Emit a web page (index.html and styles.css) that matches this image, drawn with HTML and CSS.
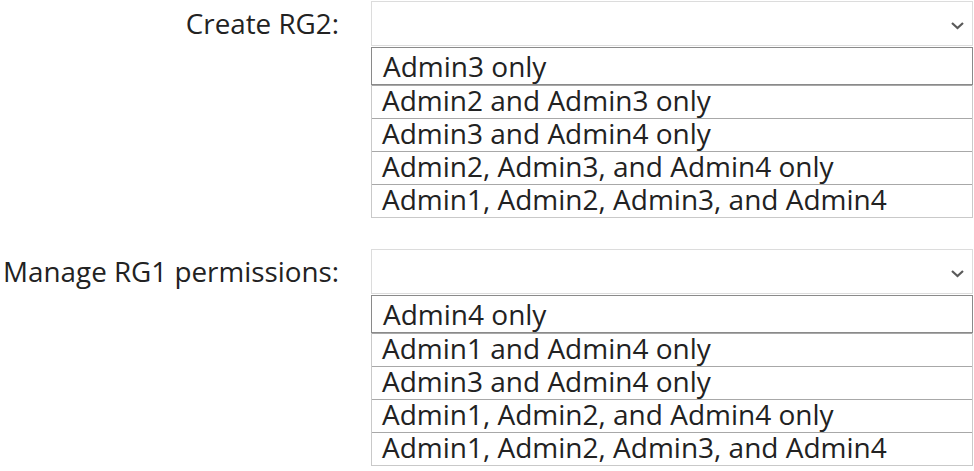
FILE: index.html
```html
<!DOCTYPE html>
<html lang="en">
<head>
<meta charset="utf-8">
<title>Dropdowns</title>
<link rel="stylesheet" href="styles.css">
</head>
<body>
<div class="form">
  <div class="field">
    <div class="label">Create RG2:</div>
    <div class="control">
      <div class="select">
        <svg class="chev" width="15" height="9" viewBox="0 0 15 9"><path d="M2 2 L7.5 7 L13 2" fill="none" stroke="#5a5a5a" stroke-width="2.2"/></svg>
      </div>
      <ul class="options">
        <li class="opt first">Admin3 only</li>
        <li class="opt">Admin2 and Admin3 only</li>
        <li class="opt">Admin3 and Admin4 only</li>
        <li class="opt">Admin2, Admin3, and Admin4 only</li>
        <li class="opt">Admin1, Admin2, Admin3, and Admin4</li>
      </ul>
    </div>
  </div>
  <div class="field">
    <div class="label">Manage RG1 permissions:</div>
    <div class="control">
      <div class="select">
        <svg class="chev" width="15" height="9" viewBox="0 0 15 9"><path d="M2 2 L7.5 7 L13 2" fill="none" stroke="#5a5a5a" stroke-width="2.2"/></svg>
      </div>
      <ul class="options">
        <li class="opt first">Admin4 only</li>
        <li class="opt">Admin1 and Admin4 only</li>
        <li class="opt">Admin3 and Admin4 only</li>
        <li class="opt">Admin1, Admin2, and Admin4 only</li>
        <li class="opt">Admin1, Admin2, Admin3, and Admin4</li>
      </ul>
    </div>
  </div>
</div>
</body>
</html>
```
FILE: styles.css
```css
html, body {
  margin: 0;
  padding: 0;
  background: #ffffff;
}
body {
  font-family: "Open Sans", "Noto Sans", sans-serif;
  color: #222222;
}
.form {
  display: flex;
  flex-direction: column;
  gap: 31px;
  padding-top: 1px;
}
.field {
  display: grid;
  grid-template-columns: 339px 602px;
  column-gap: 32px;
  align-items: start;
}
.label {
  height: 43px;
  display: flex;
  align-items: center;
  justify-content: flex-end;
  font-size: 27.8px;
  line-height: 34px;
  white-space: nowrap;
}
.control {
  display: flex;
  flex-direction: column;
  gap: 1px;
}
.select {
  height: 45px;
  border: 1px solid #dcdcdc;
  display: flex;
  align-items: center;
  justify-content: flex-end;
  padding-right: 7px;
  box-sizing: border-box;
}
.chev {
  margin-top: 3px;
}
.options {
  list-style: none;
  margin: 0;
  padding: 0;
  border: 1px solid #c9c9c9;
  border-top: none;
}
.opt {
  height: 33px;
  border-top: 1px solid #a8a8a8;
  box-sizing: border-box;
  display: flex;
  align-items: center;
  padding-left: 10px;
  padding-bottom: 5px;
  font-size: 28px;
  line-height: 28px;
  white-space: nowrap;
}
.opt.first {
  height: 38px;
  border: 1px solid #8a8a8a;
  margin: 0 -1px;
  padding-left: 11px;
  padding-bottom: 1px;
}
```
